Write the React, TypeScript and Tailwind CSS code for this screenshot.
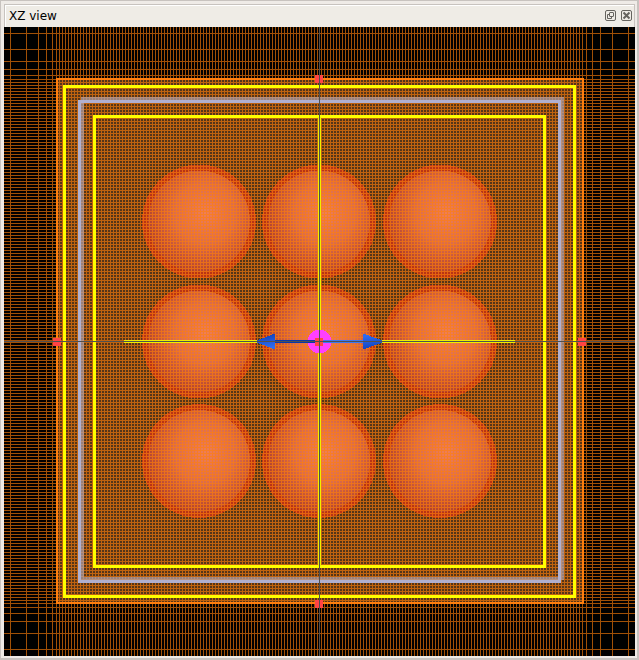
import React from "react";

const OUTER_X_LEFT = [10, 26, 38, 46, 52];
const OUTER_X_RIGHT = [586, 592, 600, 612, 628];
const OUTER_Y_TOP = [33, 49, 61, 69, 75];
const OUTER_Y_BOTTOM = [607, 613, 621, 633, 649];
const CELLS = 175;

const spread = (from: number, to: number) =>
  Array.from({ length: CELLS + 1 }, (_, i) => Math.round(from + (i * (to - from)) / CELLS));

const xs = [...OUTER_X_LEFT, ...spread(56, 582), ...OUTER_X_RIGHT];
const ys = [...OUTER_Y_TOP, ...spread(79, 603), ...OUTER_Y_BOTTOM];

const gridPath =
  xs.map((x) => `M${x} 27h1v629h-1z`).join("") + ys.map((y) => `M4 ${y}h631v1H4z`).join("");

const columns = [199, 319, 440];
const rows = [221.5, 341.5, 461];
const handles = [
  [319, 79],
  [57, 342],
  [582, 342],
  [319, 604],
];

function Scene() {
  return (
    <svg
      viewBox="4 27 631 629"
      preserveAspectRatio="xMidYMid slice"
      className="block h-full w-full"
      shapeRendering="crispEdges"
      role="img"
      aria-label="XZ view of the simulation grid"
    >
      <defs>
        <radialGradient id="ball" cx="0.56" cy="0.42" r="0.6">
          <stop offset="0" stopColor="#ee7e58" />
          <stop offset="0.5" stopColor="#da6c4c" />
          <stop offset="1" stopColor="#b0402a" />
        </radialGradient>
        <linearGradient id="cone" x1="0" y1="0" x2="1" y2="1">
          <stop offset="0" stopColor="#0c3cb4" />
          <stop offset="0.5" stopColor="#2e6cf0" />
          <stop offset="1" stopColor="#0c3cb4" />
        </linearGradient>
      </defs>

      <rect x="4" y="27" width="631" height="629" fill="#000" />
      <rect x="57" y="79" width="526" height="525" fill="#553519" />
      {columns.map((cx) =>
        rows.map((cy) => (
          <g key={`${cx}-${cy}`}>
            <circle cx={cx} cy={cy} r="57" fill="#b83416" />
            <circle cx={cx} cy={cy} r="51" fill="url(#ball)" />
          </g>
        )),
      )}
      <path d={gridPath} fill="#ff7f0a" fillOpacity="0.63" />

      <rect x="57" y="79" width="526" height="524" fill="none" stroke="#ff7f0e" strokeWidth="2" />
      <rect x="82.5" y="98.5" width="480" height="480" fill="none" stroke="#b4a4ac" strokeOpacity="0.7" strokeWidth="3" />
      <rect x="79.5" y="101.5" width="480" height="480" fill="none" stroke="#b0b0d0" strokeWidth="3" />
      <rect x="64.5" y="86.5" width="510" height="510" fill="none" stroke="#ffff00" strokeWidth="3" />
      <rect x="94.5" y="116.5" width="450" height="450" fill="none" stroke="#ffff00" strokeWidth="3" />

      <path d="M318 117h3v449h-3zM124 340h391v3H124z" fill="#f0f000" />
      <circle cx="319.5" cy="341.5" r="12" fill="#ff40ff" />
      <path d="M275 340h44v3h-44z" fill="#0838a8" />
      <path d="M319 340h45v3h-45z" fill="#3c78f0" />
      <path d="M254 341.5l21-8v16zM385 341.500l-22-8v16z" fill="url(#cone)" />
      {handles.map(([x, y]) => (
        <rect key={`${x}-${y}`} x={x - 4} y={y - 4} width="8" height="8" fill="#ff4444" />
      ))}
      <rect x="315" y="338" width="8" height="8" fill="#ff4444" />
      <path d="M319 27h1v629h-1zM4 341h631v1H4z" fill="#505050" />
    </svg>
  );
}

export default function App() {
  return (
    <div className="flex h-screen w-full flex-col border-t border-r-2 border-b-2 border-l border-[#c8c3bf] bg-[#efebe7] pt-[3px] pr-[2px] pb-[2px] pl-[3px]">
      <header className="flex h-[23px] shrink-0 items-center border-t border-r border-l border-[#c8c3bf] bg-[#efece6] pr-px pl-1 shadow-[inset_1px_1px_0_#ffffff]">
        <h1 className="flex-1 font-['DejaVu_Sans',sans-serif] text-[12px] leading-4 text-black">XZ view</h1>
        <div className="flex gap-1">
          <button type="button" aria-label="Float" className="block h-3 w-3">
            <svg viewBox="0 0 12 12" className="h-3 w-3" fill="none" stroke="#66645f">
              <rect x="0.5" y="0.5" width="10" height="10" rx="1.5" />
              <rect x="4.5" y="2.5" width="4" height="4" rx="0.5" />
              <path d="M4.500 4.500H2.500v4h4V6.500" />
            </svg>
          </button>
          <button type="button" aria-label="Close" className="block h-3 w-3">
            <svg viewBox="0 0 12 12" className="h-3 w-3" fill="none" stroke="#66645f">
              <rect x="0.5" y="0.5" width="10" height="10" rx="1.5" />
              <path d="M2.500 2.500l6 6M8.500 2.500l-6 6" strokeWidth="2" />
            </svg>
          </button>
        </div>
      </header>
      <main className="min-h-0 flex-1 overflow-hidden bg-black">
        <Scene />
      </main>
    </div>
  );
}
